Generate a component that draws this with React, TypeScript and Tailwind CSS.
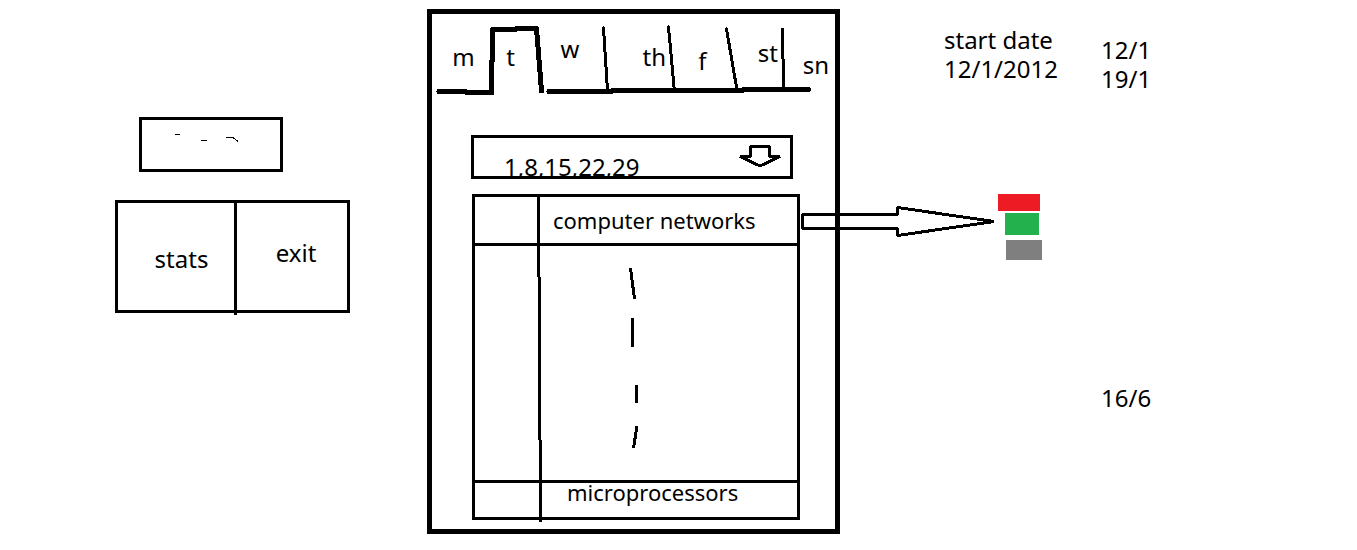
import { useState } from "react";

const days = [
  { name: "m", style: "pt-7 pl-1 text-center" },
  { name: "t", style: "pt-7 pr-3 text-center" },
  { name: "w", style: "pt-5 pr-2 text-center" },
  { name: "th", style: "pt-7 pr-1.5 text-right" },
  { name: "f", style: "pt-8 text-center" },
  { name: "st", style: "pt-6 pr-1.5 text-right" },
  { name: "sn", style: "pt-9 pr-1.5 text-right" },
];

function DayTabs() {
  const [active, setActive] = useState("t");
  return (
    <div className="relative">
      <svg
        className="absolute inset-0 h-full w-full"
        viewBox="432 14 403 84"
        preserveAspectRatio="none"
        fill="none"
        stroke="#000"
        strokeLinecap="round"
        strokeLinejoin="round"
        shapeRendering="crispEdges"
        aria-hidden="true"
      >
        <g strokeWidth="5">
          <path d="M439 91.5H465L467 92.5H491.5" />
          <path d="M491.5 93V62L492.5 60V29.5H515L517 28.5H536.5L541.5 91" />
          <path d="M549 91.5H611L613 90.5H742L744 89.5H808.5" />
        </g>
        <g strokeWidth="3">
          <path d="M603.5 28L607.5 90" />
          <path d="M668.5 27L674.5 92" />
          <path d="M726.5 29L737 90" />
          <path d="M782.5 29V58L783.5 60V90" />
        </g>
      </svg>
      <div
        role="tablist"
        aria-label="Day"
        className="relative grid h-[84px] grid-cols-[59fr_51fr_64fr_66fr_61fr_51fr_51fr]"
      >
        {days.map((day) => (
          <button
            key={day.name}
            role="tab"
            type="button"
            aria-selected={active === day.name}
            onClick={() => setActive(day.name)}
            className={`flex flex-col ${day.style}`}
          >
            <span className="w-full">{day.name}</span>
          </button>
        ))}
      </div>
    </div>
  );
}

function DateSelect() {
  return (
    <div className="relative mr-[42px] ml-[39px] h-11 border-3 border-black">
      <select
        aria-label="Dates"
        className="block h-[43px] w-full appearance-none rounded-none bg-transparent pt-3.5 pl-[30px] leading-[29px]"
      >
        <option>1,8,15,22,29</option>
      </select>
      <svg
        className="pointer-events-none absolute top-[7px] right-2 h-6 w-11"
        viewBox="738 145 44 24"
        fill="none"
        stroke="#000"
        strokeWidth="3"
        strokeLinejoin="bevel"
        shapeRendering="crispEdges"
        aria-hidden="true"
      >
        <path d="M750.5 146.5H769.5V156.5H780L760 166L740 156.5H750.5Z" />
      </svg>
    </div>
  );
}

function Subjects() {
  return (
    <div className="relative mt-[15px] mr-[35px] ml-10">
      <table className="w-full table-fixed border-separate border-spacing-0 border-3 border-black text-[22px]">
        <colgroup>
          <col className="w-[68px]" />
          <col />
        </colgroup>
        <tbody>
          <tr>
            <td className="h-[49px] border-b-3 border-black p-0" />
            <td className="h-[49px] border-b-3 border-black p-0 pl-2.5">
              computer networks
            </td>
          </tr>
          <tr>
            <td className="h-[237px] border-b-3 border-black p-0" />
            <td className="h-[237px] border-b-3 border-black p-0 pb-2 pl-[84px]">
              <svg
                className="block h-[190px] w-5"
                viewBox="627 264 20 190"
                fill="none"
                stroke="#000"
                strokeWidth="3"
                shapeRendering="crispEdges"
                aria-hidden="true"
              >
                <path d="M630.5 268L634.5 299M632.5 318V347M636.5 385V403M637 426L633.5 448" />
              </svg>
            </td>
          </tr>
          <tr>
            <td className="h-[34px] p-0" />
            <td className="h-[34px] p-0 pl-6 align-top leading-[18px]">
              microprocessors
            </td>
          </tr>
        </tbody>
      </table>
      <svg
        className="pointer-events-none absolute top-0 left-[62px] h-[328px] w-3"
        viewBox="534 194 12 328"
        fill="none"
        stroke="#000"
        strokeWidth="3"
        shapeRendering="crispEdges"
        aria-hidden="true"
      >
        <path d="M538.5 194V277M539.5 277V440M540.5 440V522" />
      </svg>
      <svg
        className="pointer-events-none absolute top-2.5 left-full h-[36px] w-[196px]"
        viewBox="800 204 196 36"
        fill="none"
        stroke="#000"
        strokeWidth="3"
        strokeLinejoin="bevel"
        shapeRendering="crispEdges"
        aria-hidden="true"
      >
        <path d="M802.5 214.5H897.5V207.5L994 221.5L897.5 235.5V228.5H802.5Z" />
      </svg>
    </div>
  );
}

export default function App() {
  return (
    <main className="grid grid-cols-[427fr_413fr_517fr] bg-white pt-[9px] font-['Noto_Sans',sans-serif] text-2xl leading-[29px] text-black">
      <section className="pt-[108px] pl-[115px]">
        <div className="ml-6 h-[55px] w-36 border-3 border-black">
          <svg
            className="block h-full w-full"
            viewBox="142 120 138 49"
            fill="none"
            stroke="#000"
            shapeRendering="crispEdges"
            aria-hidden="true"
          >
            <path d="M175 134.5H180M201 140.5H207M226 137.5H233L238 141.5" />
          </svg>
        </div>
        <div className="relative mt-7 flex h-[113px] w-[235px] border-3 border-black">
          <button type="button" className="w-[119px] pt-1 pl-2">
            stats
          </button>
          <button type="button" className="flex-1 pr-2 pb-2 pl-4">
            exit
          </button>
          <span className="absolute top-0 left-[116px] h-28 w-[3px] bg-black" />
        </div>
      </section>

      <section className="border-5 border-black pb-[9px]">
        <DayTabs />
        <div className="pt-[37px]">
          <DateSelect />
          <Subjects />
        </div>
      </section>

      <section className="flex pl-[104px]">
        <div className="w-[157px] shrink-0 pt-4">
          <p>
            start date
            <br />
            12/1/2012
          </p>
          <div className="mt-[111px] ml-[54px]">
            <div className="h-[17px] w-[42px] bg-[#ed1c24]" />
            <div className="mt-0.5 ml-[7px] h-[22px] w-[34px] bg-[#22b14c]" />
            <div className="mt-[5px] ml-2 h-5 w-9 bg-[#7f7f7f]" />
          </div>
        </div>
        <div className="pt-[26px]">
          <p>
            12/1
            <br />
            19/1
          </p>
          <p className="mt-[290px]">16/6</p>
        </div>
      </section>
    </main>
  );
}
